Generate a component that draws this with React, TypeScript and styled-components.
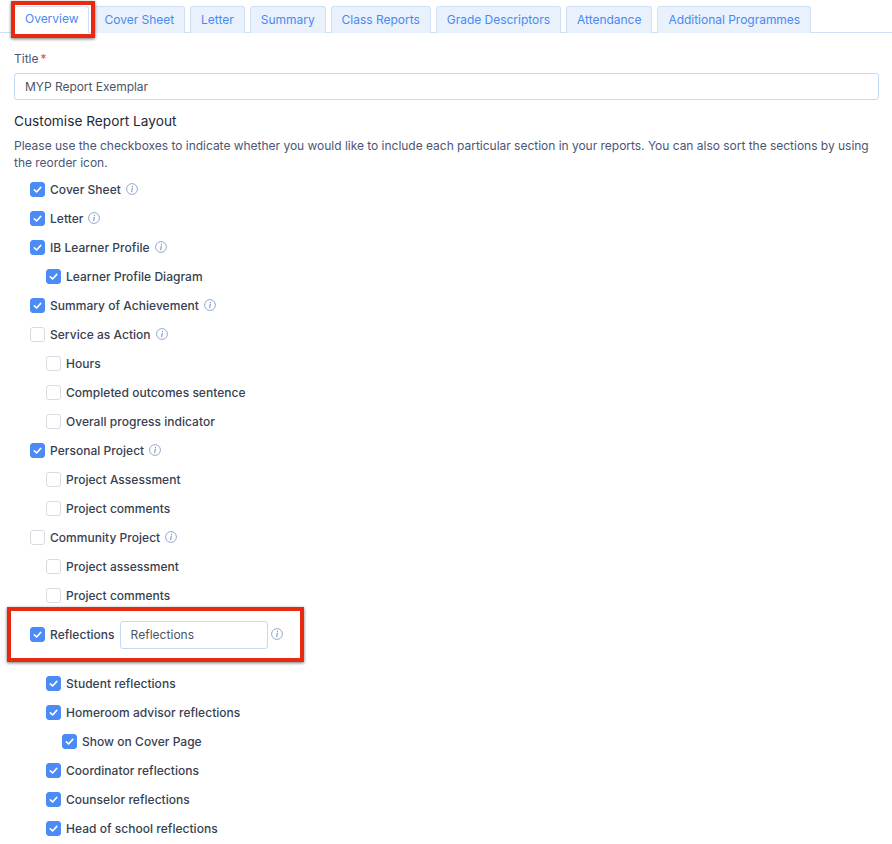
import React from "react";
import styled, { createGlobalStyle } from "styled-components";

const GlobalStyle = createGlobalStyle`
  html, body { margin: 0; padding: 0; background: #fff; }
  body { font-family: Inter, "Liberation Sans", sans-serif; -webkit-font-smoothing: antialiased; }
`;

const Page = styled.div`
  position: relative;
  width: 892px;
  height: 844px;
  overflow: hidden;
`;

const TabBar = styled.div`
  display: flex;
  gap: 5px;
  height: 33px;
  box-sizing: border-box;
  padding: 6px 0 0 14px;
  border-bottom: 1px solid #cfe0f5;
`;

const Tab = styled.div<{ $active?: boolean }>`
  box-sizing: border-box;
  height: 27px;
  padding: 0 10px 2px;
  margin-right: ${(p) => (p.$active ? -1 : 0)}px;
  display: flex;
  align-items: center;
  font-size: 12px;
  letter-spacing: -0.02px;
  color: #4a8af0;
  white-space: nowrap;
  border: 1px solid #cfe0f5;
  border-bottom: ${(p) => (p.$active ? "1px solid #fff" : "none")};
  border-radius: 3px 3px 0 0;
  background: ${(p) => (p.$active ? "#fff" : "#e9f1fc")};
`;

const Content = styled.div`
  padding: 0 13px 0 14px;
`;

const FieldLabel = styled.div`
  margin-top: 17px;
  font-size: 12px;
  line-height: 17px;
  color: #4b5675;
`;

const Required = styled.span`
  color: #ef4444;
  margin-left: 2px;
`;

const TextBox = styled.div`
  box-sizing: border-box;
  height: 28px;
  display: flex;
  align-items: center;
  padding: 0 10px;
  font-size: 12px;
  font-weight: 400;
  color: #4b5563;
  border: 1px solid #c3daf5;
  border-radius: 3px;
  background: #fff;
`;

const TitleBox = styled(TextBox)`
  margin-top: 6px;
  height: 27px;
  letter-spacing: -0.03px;
`;

const LabelBox = styled(TextBox)`
  width: 148px;
  margin-right: -2px;
`;

const Heading = styled.div`
  margin-top: 12px;
  font-size: 13.7px;
  line-height: 18px;
  color: #1f2937;
`;

const Description = styled.p`
  margin: 7px 0 4px;
  font-size: 12px;
  line-height: 17px;
  letter-spacing: -0.02px;
  color: #4b5675;
`;

const Row = styled.div<{ $level: number; $tall?: boolean }>`
  box-sizing: border-box;
  display: flex;
  align-items: center;
  gap: 5px;
  height: ${(p) => (p.$tall ? 59 : 29)}px;
  padding-left: ${(p) => 16 + p.$level * 16}px;
  padding-bottom: ${(p) => (p.$tall ? 10 : 0)}px;
  font-size: 12px;
  font-weight: 500;
  letter-spacing: 0.03px;
  color: #374151;
  white-space: nowrap;
`;

const Box = styled.span<{ $on: boolean }>`
  flex: none;
  box-sizing: border-box;
  width: 15px;
  height: 15px;
  display: flex;
  align-items: center;
  justify-content: center;
  border-radius: 3px;
  background: ${(p) => (p.$on ? "#4a8bf5" : "#fff")};
  border: 1px solid ${(p) => (p.$on ? "#4a8bf5" : "#d7dbe2")};
`;

const InfoMark = styled.svg`
  flex: none;
  margin-top: -1px;
`;

const Annotation = styled.div`
  position: absolute;
  box-sizing: border-box;
  border: 4px solid #e8290f;
  box-shadow: 0 1px 3px rgba(0, 0, 0, 0.55);
`;

const TabMark = styled(Annotation)`
  left: 11px;
  top: 1px;
  width: 84px;
  height: 37px;
`;

const ReflectionsMark = styled(Annotation)`
  left: 7px;
  top: 607px;
  width: 297px;
  height: 55px;
`;

const Check = () => (
  <svg width="9" height="9" viewBox="0 0 10 10" fill="none">
    <path d="M1.5 5.4 L4 7.8 L8.6 2.6" stroke="#fff" strokeWidth="1.8" strokeLinecap="round" strokeLinejoin="round" />
  </svg>
);

const Info = () => (
  <InfoMark width="12" height="12" viewBox="0 0 12 12" fill="none">
    <circle cx="6" cy="6" r="5.4" stroke="#93a9cc" strokeWidth="1" />
    <path d="M6.3 5.2 L5.7 8.6 M6.5 3.3 L6.45 3.6" stroke="#7f96bb" strokeWidth="1.1" strokeLinecap="round" />
  </InfoMark>
);

const tabs = ["Overview", "Cover Sheet", "Letter", "Summary", "Class Reports", "Grade Descriptors", "Attendance", "Additional Programmes"];

interface Section {
  label: string
  level: number
  on: boolean
  info?: boolean
  input?: boolean
}

const sections: Section[] = [
  { label: "Cover Sheet", level: 0, on: true, info: true },
  { label: "Letter", level: 0, on: true, info: true },
  { label: "IB Learner Profile", level: 0, on: true, info: true },
  { label: "Learner Profile Diagram", level: 1, on: true },
  { label: "Summary of Achievement", level: 0, on: true, info: true },
  { label: "Service as Action", level: 0, on: false, info: true },
  { label: "Hours", level: 1, on: false },
  { label: "Completed outcomes sentence", level: 1, on: false },
  { label: "Overall progress indicator", level: 1, on: false },
  { label: "Personal Project", level: 0, on: true, info: true },
  { label: "Project Assessment", level: 1, on: false },
  { label: "Project comments", level: 1, on: false },
  { label: "Community Project", level: 0, on: false, info: true },
  { label: "Project assessment", level: 1, on: false },
  { label: "Project comments", level: 1, on: false },
  { label: "Reflections", level: 0, on: true, info: true, input: true },
  { label: "Student reflections", level: 1, on: true },
  { label: "Homeroom advisor reflections", level: 1, on: true },
  { label: "Show on Cover Page", level: 2, on: true },
  { label: "Coordinator reflections", level: 1, on: true },
  { label: "Counselor reflections", level: 1, on: true },
  { label: "Head of school reflections", level: 1, on: true },
];

const App = () => {
  return (
    <Page>
      <GlobalStyle />
      <TabBar>
        {tabs.map((name, i) => (
          <Tab key={name} $active={i === 0}>{name}</Tab>
        ))}
      </TabBar>
      <Content>
        <FieldLabel>Title<Required>*</Required></FieldLabel>
        <TitleBox>MYP Report Exemplar</TitleBox>
        <Heading>Customise Report Layout</Heading>
        <Description>
          Please use the checkboxes to indicate whether you would like to include each particular section in your reports. You can also sort the sections by using the reorder icon.
        </Description>
        {sections.map((item, i) => (
          <Row key={i} $level={item.level} $tall={item.input}>
            <Box $on={item.on}>{item.on && <Check />}</Box>
            {item.label}
            {item.input && <LabelBox>Reflections</LabelBox>}
            {item.info && <Info />}
          </Row>
        ))}
      </Content>
      <TabMark />
      <ReflectionsMark />
    </Page>
  );
};

export default App;
